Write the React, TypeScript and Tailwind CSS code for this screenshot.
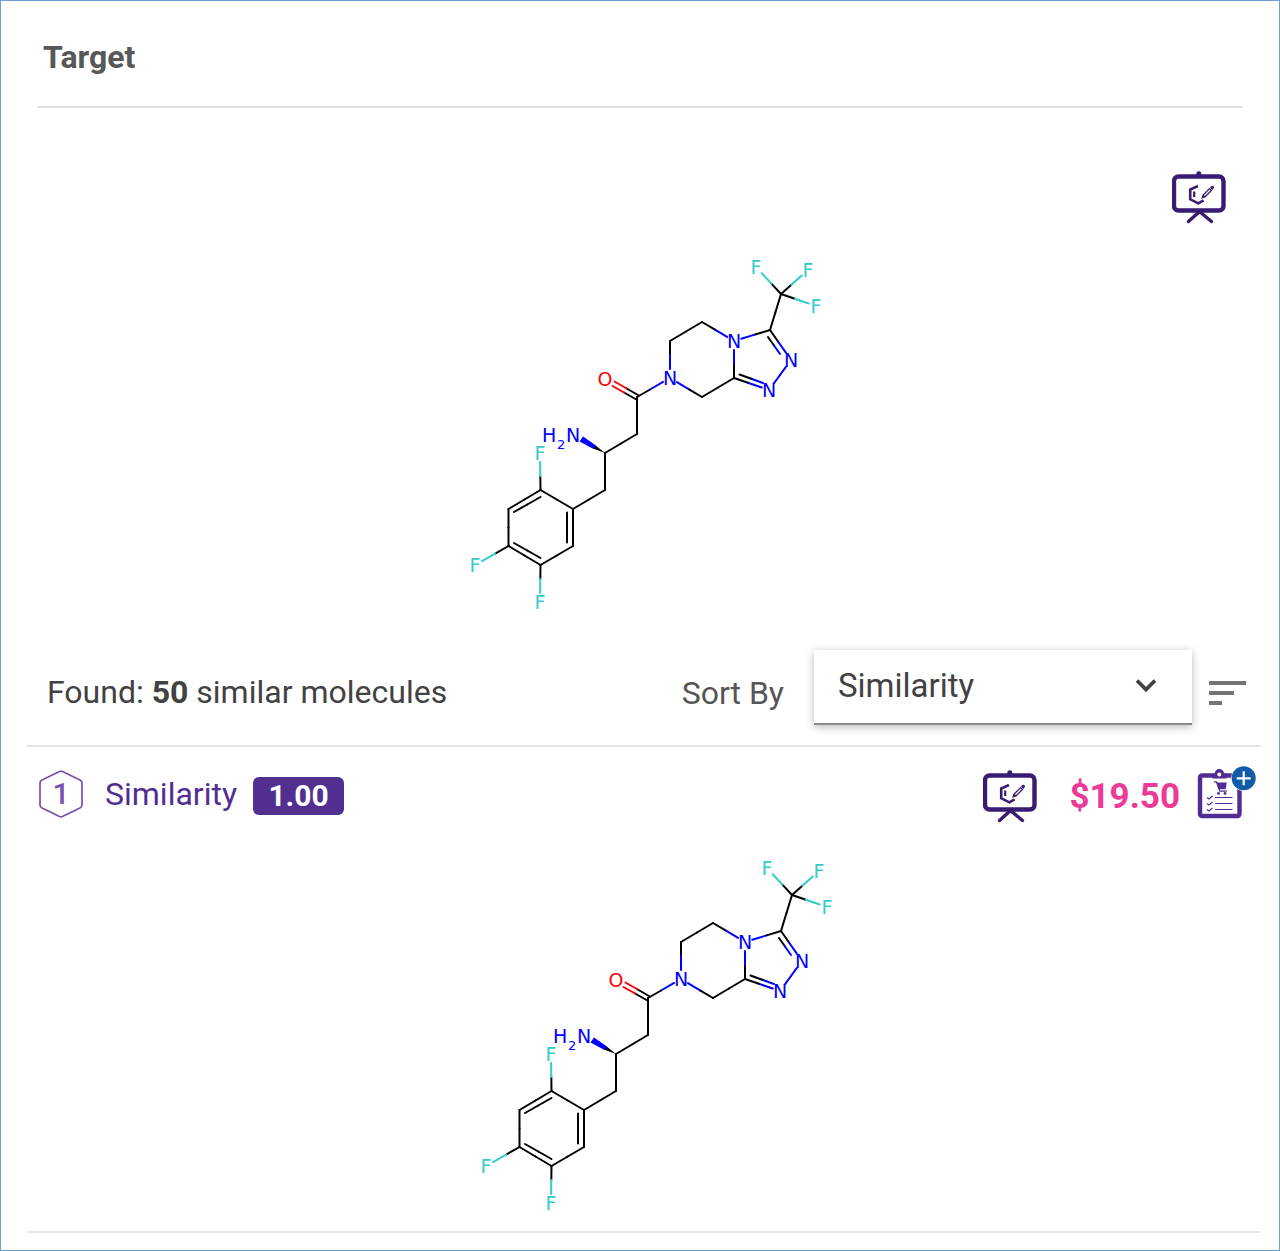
import { useState } from "react";
import { ChevronDown } from "lucide-react";

type Point = [number, number];

const COLORS = {
  C: "#000000",
  N: "#0000ff",
  O: "#ff0000",
  F: "#33cccc",
};

type Element = keyof typeof COLORS;

interface Atom {
  el: Element;
  at: Point;
}

interface Bond {
  from: number;
  to: number;
  // second line of a double bond, drawn inside the ring
  inner?: [Point, Point];
}

const ATOMS: Atom[] = [
  { el: "C", at: [331, 44] }, // 0 CF3
  { el: "F", at: [306, 17] },
  { el: "F", at: [358, 20] },
  { el: "F", at: [366, 56] },
  { el: "C", at: [320, 80] }, // 4 triazole
  { el: "N", at: [341, 110] },
  { el: "N", at: [319, 140] },
  { el: "C", at: [284, 128] },
  { el: "N", at: [284, 91] },
  { el: "C", at: [252, 72] }, // 9 piperazine
  { el: "C", at: [220, 91] },
  { el: "N", at: [220, 128] },
  { el: "C", at: [252, 147] },
  { el: "C", at: [187, 147] }, // 13 carbonyl
  { el: "O", at: [155, 129] },
  { el: "C", at: [187, 184] },
  { el: "C", at: [155, 203] },
  { el: "C", at: [155, 240] },
  { el: "C", at: [123, 259] }, // 18 phenyl
  { el: "C", at: [90.5, 240] },
  { el: "C", at: [58.5, 259] },
  { el: "C", at: [58.5, 296] },
  { el: "C", at: [90.5, 315] },
  { el: "C", at: [123, 296] },
  { el: "F", at: [90, 203] },
  { el: "F", at: [25, 315] },
  { el: "F", at: [90, 352] },
];

const BONDS: Bond[] = [
  { from: 0, to: 1 },
  { from: 0, to: 2 },
  { from: 0, to: 3 },
  { from: 0, to: 4 },
  { from: 4, to: 5, inner: [[318, 87], [330, 104]] },
  { from: 5, to: 6 },
  { from: 6, to: 7, inner: [[313, 133], [289.5, 124.5]] },
  { from: 7, to: 8 },
  { from: 8, to: 4 },
  { from: 8, to: 9 },
  { from: 9, to: 10 },
  { from: 10, to: 11 },
  { from: 11, to: 12 },
  { from: 12, to: 7 },
  { from: 11, to: 13 },
  { from: 13, to: 15 },
  { from: 15, to: 16 },
  { from: 16, to: 17 },
  { from: 17, to: 18 },
  { from: 18, to: 19 },
  { from: 19, to: 20, inner: [[90.5, 247], [64, 262]] },
  { from: 20, to: 21 },
  { from: 21, to: 22, inner: [[64, 293], [90.5, 308]] },
  { from: 22, to: 23 },
  { from: 23, to: 18, inner: [[117, 292.5], [117, 262.5]] },
  { from: 19, to: 24 },
  { from: 21, to: 25 },
  { from: 22, to: 26 },
];

// Stop short of a lettered atom so the line does not run into the glyph
function trim(atom: Atom, other: Atom): Point {
  if (atom.el === "C") return atom.at;
  const dx = other.at[0] - atom.at[0];
  const dy = other.at[1] - atom.at[1];
  const len = Math.hypot(dx, dy);
  const gap = 7 + 2 * Math.abs(dy / len);
  return [atom.at[0] + (dx / len) * gap, atom.at[1] + (dy / len) * gap];
}

function SplitLine({ a, b, ca, cb }: { a: Point; b: Point; ca: string; cb: string }) {
  const mid: Point = [(a[0] + b[0]) / 2, (a[1] + b[1]) / 2];
  return (
    <>
      <line x1={a[0]} y1={a[1]} x2={mid[0]} y2={mid[1]} stroke={ca} />
      <line x1={mid[0]} y1={mid[1]} x2={b[0]} y2={b[1]} stroke={cb} />
    </>
  );
}

function Molecule() {
  return (
    <svg
      width="380"
      height="370"
      viewBox="0 0 380 370"
      role="img"
      aria-label="Molecule structure"
      fontFamily='"DejaVu Sans", sans-serif'
      fontSize="19"
      className="block"
    >
      <g strokeWidth="2" strokeLinecap="round">
        {BONDS.map((bond) => {
          const from = ATOMS[bond.from];
          const to = ATOMS[bond.to];
          const ca = COLORS[from.el];
          const cb = COLORS[to.el];
          return (
            <g key={`${bond.from}-${bond.to}`}>
              <SplitLine a={trim(from, to)} b={trim(to, from)} ca={ca} cb={cb} />
              {bond.inner && (
                <SplitLine a={bond.inner[0]} b={bond.inner[1]} ca={ca} cb={cb} />
              )}
            </g>
          );
        })}
        {/* C=O */}
        <SplitLine a={[188, 145]} b={[164.5, 131.5]} ca={COLORS.C} cb={COLORS.O} />
        <SplitLine a={[185.5, 149]} b={[162.5, 136]} ca={COLORS.C} cb={COLORS.O} />
      </g>
      {/* stereo wedge */}
      <path d="M155 203 143 198.5 145 195Z" fill="#000000" />
      <path d="M143.5 199 129.5 191.5 133 186.5 146 195.5Z" fill="#0000ff" />
      {ATOMS.filter((a) => a.el !== "C").map((a) => (
        <text
          key={a.at.join()}
          x={a.at[0]}
          y={a.at[1] + 7}
          textAnchor="middle"
          fill={COLORS[a.el]}
        >
          {a.el}
        </text>
      ))}
      <g fill={COLORS.N}>
        <text x="92" y="192">H</text>
        <text x="107" y="199" fontSize="13">2</text>
        <text x="116" y="192">N</text>
      </g>
    </svg>
  );
}

function BoardIcon() {
  return (
    <svg width="54" height="53" viewBox="0 0 54 53" fill="none" stroke="#371c71">
      <rect x="2" y="5.5" width="49.5" height="34" rx="4.5" strokeWidth="4.4" />
      <path d="M24.3 5V2.8a2.5 2.5 0 0 1 5 0V5Z" fill="#371c71" stroke="none" />
      <path d="M27 41 16.5 50.5M28 41 39.5 50.5" strokeWidth="3.4" strokeLinecap="round" />
      <path d="M26 15 18.2 18.6v9.7l8.2 4 5.2-3" strokeWidth="2.6" />
      <path d="M22.2 20.5V26" strokeWidth="2.2" />
      <path d="M31 24.2 37.6 17.6 39.4 19.4 32.8 26Z" strokeWidth="1.3" />
      <path d="M30.6 24 29 28l4-1.8Z" fill="#371c71" stroke="none" />
      <path d="M38 16.6 39.5 15.1q1-.8 2 .2t.2 2L40.3 18.9Z" fill="#371c71" stroke="none" />
    </svg>
  );
}

function ClipboardIcon() {
  return (
    <svg width="60" height="54" viewBox="0 0 60 54" fill="none">
      <rect x="3" y="10.5" width="39.5" height="40.5" rx="2" stroke="#512d91" strokeWidth="4.4" />
      <path d="M15.5 13.4V8.6h2q1-4.6 4.8-4.6t4.8 4.6h2.400v4.800Z" fill="#512d91" />
      <circle cx="22.3" cy="9.6" r="2" fill="#fff" />
      <path d="M17 16.8h2.500l3.300 9.400h7" stroke="#512d91" strokeWidth="1.3" />
      <path d="M19.2 17.600h10.600l-1.200 6.600h-7Z" fill="#512d91" />
      <circle cx="21.5" cy="28.4" r="1.4" fill="#512d91" />
      <circle cx="28" cy="28.4" r="1.4" fill="#512d91" />
      <path d="M18 32.5h17.500M18 38.5h17.500M18 44.5h17.500" stroke="#512d91" />
      <path
        d="m10 32.500 2 1.500 3.500-3M10 38.500l2 1.500 3.500-3M10 44.500l2 1.500 3.500-3"
        stroke="#512d91"
        strokeWidth="1.2"
      />
      <circle cx="46.7" cy="13.3" r="12.5" fill="#fff" />
      <circle cx="46.7" cy="13.3" r="12" fill="#0f5ca8" />
      <path d="M46.7 6.3v14M39.7 13.3h14" stroke="#fff" strokeWidth="2.2" />
    </svg>
  );
}

function SortIcon() {
  return (
    <svg width="37" height="26" viewBox="0 0 37 26" fill="#757575">
      <rect x="0" y="0" width="37" height="4" />
      <rect x="0" y="10" width="25" height="4" />
      <rect x="0" y="20" width="13" height="4" />
    </svg>
  );
}

function RankBadge({ rank }: { rank: number }) {
  return (
    <div className="grid h-12 w-11 place-items-center">
      <svg
        width="44"
        height="48"
        viewBox="0 0 44 48"
        fill="none"
        className="col-start-1 row-start-1"
      >
        <path
          d="M20.5 1.5q1.500-.6 3 0l17.500 8.500q2 1 2 3v22q0 2-2 3l-17.500 8.500q-1.500.6-3 0L3 38q-2-1-2-3V13q0-2 2-3Z"
          stroke="#7550ad"
          strokeWidth="1.7"
        />
      </svg>
      <span className="col-start-1 row-start-1 text-[30px] leading-8 font-medium text-[#7853b0]">
        {rank}
      </span>
    </div>
  );
}

const results = [{ rank: 1, similarity: 1, price: 19.5 }];

export default function App() {
  const [sortBy, setSortBy] = useState("similarity");

  return (
    <main className="min-h-screen border border-[#6a9fd0] bg-white font-['Roboto',sans-serif] text-[#424242]">
      <section className="px-9">
        <h1 className="border-b-2 border-[#e2e2e2] px-1.5 pt-9 pb-[29px] text-[32px] leading-10 font-bold text-[#585858]">
          Target
        </h1>
        <div className="grid grid-cols-[1fr_auto_1fr] items-start pt-[63px]">
          <div className="col-start-2 pt-[79px]">
            <Molecule />
          </div>
          <button type="button" aria-label="Open in editor" className="mr-[17px] justify-self-end">
            <BoardIcon />
          </button>
        </div>
      </section>

      <section className="pr-[19px] pl-[26px]">
        <div className="flex items-center justify-between border-b-2 border-[#e2e2e2] pt-[30px] pr-[14px] pb-5 pl-5">
          <p className="pt-2 text-[32px] leading-10">
            Found: <b>50</b> similar molecules
          </p>
          <div className="flex items-center">
            <label htmlFor="sort" className="mr-[30px] pt-2.5 text-[32px] leading-10 text-[#555555]">
              Sort By
            </label>
            <div className="relative">
              <select
                id="sort"
                value={sortBy}
                onChange={(e) => setSortBy(e.target.value)}
                className="h-[75px] w-[378px] appearance-none border-b-2 border-[#8a8a8a] bg-white px-6 pb-0.5 text-[33px] text-[#424242] shadow-[0_2px_8px_rgba(0,0,0,0.28)]"
              >
                <option value="similarity">Similarity</option>
                <option value="price">Price</option>
              </select>
              <ChevronDown
                className="pointer-events-none absolute top-[17px] right-7 size-9 text-[#424242]"
                strokeWidth={2.5}
                strokeLinecap="butt"
                strokeLinejoin="miter"
              />
            </div>
            <button type="button" aria-label="Sort direction" className="mt-3 ml-[17px]">
              <SortIcon />
            </button>
          </div>
        </div>

        {results.map((r) => (
          <article key={r.rank} className="border-b-2 border-[#e6e6e6] pb-[10px]">
            <div className="flex h-[104px] items-start justify-between pt-[18px] pr-[3px] pl-3">
              <div className="flex items-center pt-[5px]">
                <RankBadge rank={r.rank} />
                <span className="ml-[22px] text-[32px] leading-10 text-[#512d91]">Similarity</span>
                <span className="mt-1 ml-4 w-[91px] rounded-md bg-[#512f90] text-center text-[30px] leading-[38px] font-bold text-white">
                  {r.similarity.toFixed(2)}
                </span>
              </div>
              <div className="flex items-start">
                <button type="button" aria-label="Open in editor" className="mt-[5px]">
                  <BoardIcon />
                </button>
                <span className="mt-3 ml-8 text-[35px] leading-10 font-bold text-[#ec3a96]">
                  ${r.price.toFixed(2)}
                </span>
                <button type="button" aria-label="Add to cart" className="ml-[17px]">
                  <ClipboardIcon />
                </button>
              </div>
            </div>
            <div className="flex justify-center pl-[15px]">
              <Molecule />
            </div>
          </article>
        ))}
      </section>
    </main>
  );
}
